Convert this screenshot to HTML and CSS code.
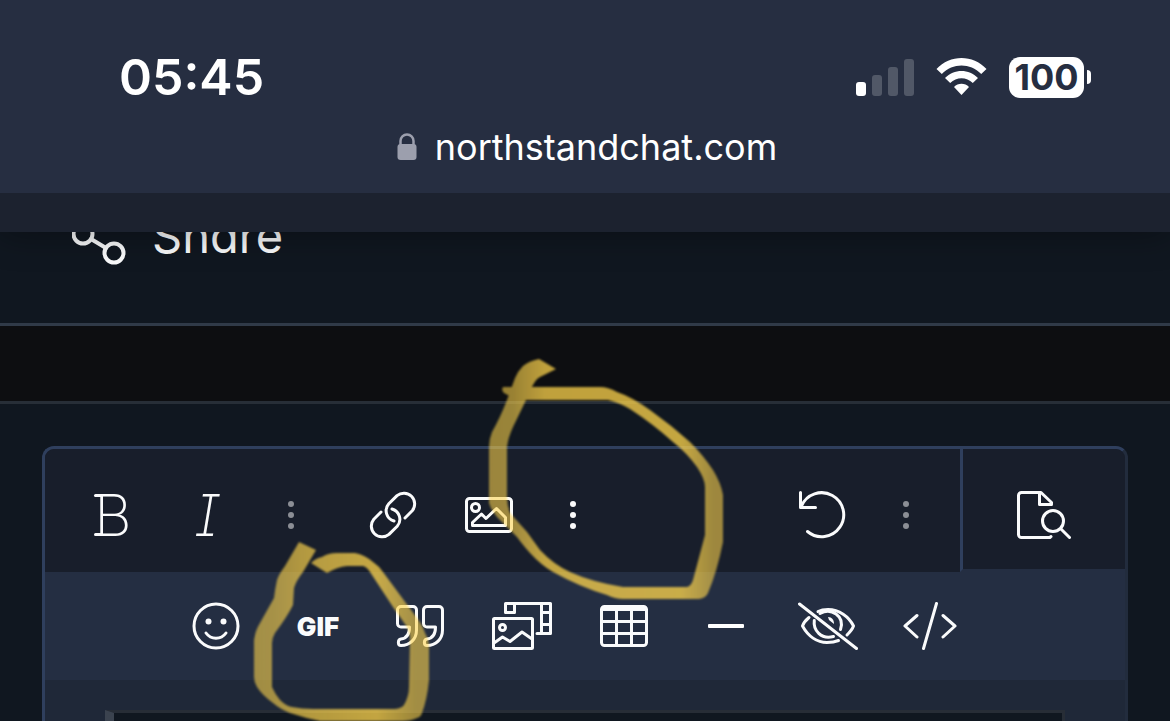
FILE: index.html
```html
<!DOCTYPE html>
<html lang="en">
<head>
    <meta charset="UTF-8">
    <meta name="viewport" content="width=device-width, initial-scale=1.0">
    <title>northstandchat.com</title>
    <link rel="stylesheet" href="styles.css">
</head>
<body>
    <header class="browser-header">
        <div class="status-bar">
            <div class="time">05:45</div>
            <div class="status-icons">
                <div class="signal">
                    <span class="bar bar-1 on"></span>
                    <span class="bar bar-2"></span>
                    <span class="bar bar-3"></span>
                    <span class="bar bar-4"></span>
                </div>
                <svg class="wifi" width="51" height="38" viewBox="0 0 51 38">
                    <path d="M0.5 11 C14 -3.6 37 -3.6 50.5 11 L45.2 16 C34 4.800 17 4.800 5.800 16 Z"/>
                    <path d="M9 20 C18 10.500 33 10.500 42 20 L36.800 25 C30.500 18.500 20.500 18.500 14.200 25 Z"/>
                    <path d="M18 29 C22 24.800 29 24.800 33 29 L25.500 37 Z"/>
                </svg>
                <div class="battery">
                    <div class="battery-level">100</div>
                    <span class="battery-tip"></span>
                </div>
            </div>
        </div>
        <div class="address">
            <svg class="lock" width="20" height="28" viewBox="0 0 20 28">
                <path d="M3.500 13 V8 a6.500 6.500 0 0 1 13 0 V13" fill="none" stroke="#9c9fad" stroke-width="2.500"/>
                <rect x="0.5" y="11" width="19" height="16" rx="3" fill="#9c9fad"/>
            </svg>
            <span>northstandchat.com</span>
        </div>
    </header>
    <div class="site-strip"></div>

    <div class="post-actions">
        <a class="share" href="#">
            <svg class="icon" width="54" height="62" viewBox="0 0 54 62">
                <circle cx="11" cy="31" r="9.500"/>
                <circle cx="42" cy="50" r="9.500"/>
                <circle cx="42" cy="12" r="9.500"/>
                <path d="M19 36 L34 45 M19 26 L34 17"/>
            </svg>
            <span>Share</span>
        </a>
    </div>
    <div class="divider"></div>

    <main class="reply">
        <div class="editor">
            <div class="toolbar">
                <div class="tool-group">
                    <button class="tool" aria-label="Bold"><span class="letter bold-letter">B</span></button>
                    <button class="tool" aria-label="Italic"><span class="letter italic-letter">I</span></button>
                    <button class="tool more muted" aria-label="More text options"><i></i><i></i><i></i></button>
                </div>
                <div class="tool-group">
                    <button class="tool" aria-label="Insert link">
                        <svg class="icon" width="48" height="48" viewBox="0 0 48 48">
                            <path d="M36 27 L43.200 19.800 A10.800 10.800 0 0 0 28 4.600 L19.800 12.800 A10.600 10.600 0 0 0 25 30"/>
                            <path d="M12 21 L4.800 28.200 A10.800 10.800 0 0 0 20 43.400 L28.200 35.200 A10.600 10.600 0 0 0 23 18"/>
                        </svg>
                    </button>
                    <button class="tool" aria-label="Insert image">
                        <svg class="icon" width="48" height="36" viewBox="0 0 48 36">
                            <rect x="1.500" y="1.500" width="45" height="33" rx="3"/>
                            <circle cx="10.500" cy="10.500" r="4"/>
                            <path d="M7.500 28.500 V25.500 L16.500 17 L21 21.500 L31.500 11.500 L40.500 20.500 V28.500 Z"/>
                        </svg>
                    </button>
                    <button class="tool more" aria-label="More insert options"><i></i><i></i><i></i></button>
                </div>
                <div class="tool-group tool-group-right">
                    <button class="tool" aria-label="Undo">
                        <svg class="icon" width="48" height="48" viewBox="0 0 48 48">
                            <path d="M2.500 1.500 V16.500 H17.500 M3.500 15 A22 22 0 1 1 9.500 40.500"/>
                        </svg>
                    </button>
                    <button class="tool more muted" aria-label="More options"><i></i><i></i><i></i></button>
                </div>
                <button class="preview" aria-label="Preview">
                    <svg class="icon" width="54" height="48" viewBox="0 0 54 48">
                        <path d="M33 46.300 L34 45.600 M33 46.500 H4.500 a3 3 0 0 1 -3 -3 V4.500 a3 3 0 0 1 3 -3 H24 L34.500 11.500 V13.500 H22.500 V1.500"/>
                        <circle cx="36" cy="30" r="10.500"/>
                        <path d="M44 38 L52.500 46.500"/>
                    </svg>
                </button>
            </div>

            <div class="toolbar-extra">
                <button class="tool" aria-label="Smilies">
                    <svg class="icon" width="48" height="48" viewBox="0 0 48 48">
                        <circle cx="24" cy="24" r="22"/>
                        <circle class="solid" cx="16.500" cy="19.500" r="3"/>
                        <circle class="solid" cx="31.500" cy="19.500" r="3"/>
                        <path d="M14 31 C19 38 29 38 34 31"/>
                    </svg>
                </button>
                <button class="tool gif">GIF</button>
                <button class="tool" aria-label="Quote">
                    <svg class="icon" width="48" height="42" viewBox="0 0 48 42">
                        <path d="M13.500 22 H5 a3.500 3.500 0 0 1 -3.500 -3.500 V5 a3.500 3.500 0 0 1 3.500 -3.500 H17 a3.500 3.500 0 0 1 3.500 3.500 V25 C20.500 34 14 40.500 5 40.500 C1.500 40.500 1.500 34.500 5 34 C10.500 33.300 13.500 30 13.500 22 Z"/>
                        <path d="M39.500 22 H31 a3.500 3.500 0 0 1 -3.500 -3.500 V5 a3.500 3.500 0 0 1 3.500 -3.500 H43 a3.500 3.500 0 0 1 3.500 3.500 V25 C46.500 34 40 40.500 31 40.500 C27.500 40.500 27.500 34.500 31 34 C36.500 33.300 39.500 30 39.500 22 Z"/>
                    </svg>
                </button>
                <button class="tool" aria-label="Media">
                    <svg class="icon" width="60" height="48" viewBox="0 0 60 48">
                        <path d="M13.500 1.500 H58.500 V31.500 H45 M13.500 1.500 V10.500 H22.500 V1.500 M49.500 1.500 V31.500 M49.500 10.500 H58.500 M49.500 22.500 H58.500"/>
                        <rect x="1.500" y="16.500" width="39" height="30" rx="1"/>
                        <circle cx="10.500" cy="25.500" r="3"/>
                        <path d="M2 41 L10.500 35 L18 39.500 L30 30 L40 37"/>
                    </svg>
                </button>
                <button class="tool" aria-label="Insert table">
                    <svg class="icon" width="48" height="42" viewBox="0 0 48 42">
                        <rect x="1.500" y="1.500" width="45" height="39" rx="3"/>
                        <path d="M2 4.500 H46 M16.500 4 V40 M31.500 4 V40 M2 16.500 H46 M2 28.500 H46"/>
                    </svg>
                </button>
                <button class="tool" aria-label="Horizontal line"><span class="rule"></span></button>
                <button class="tool" aria-label="Spoiler">
                    <svg class="icon" width="60" height="48" viewBox="0 0 60 48">
                        <path d="M1.500 2 L58.500 46.500"/>
                        <path d="M11 15.500 C8 18 5.500 21 4.500 24 C10 34 19 40.500 29 40.500 C33 40.500 37 40 40.500 38.500"/>
                        <path d="M20 9.500 C23 8 26.500 7.500 30 7.500 C41 7.500 51 14.500 55.500 24 C54.500 27 52 30 49 33"/>
                        <path d="M22 11.500 C33 5 47 14 42.500 27.500 M16.300 18.500 C15 28 23 38 35.500 34.500"/>
                        <path class="solid" d="M30 15 C34 15 36 18 36 22 L31 18 Z"/>
                    </svg>
                </button>
                <button class="tool" aria-label="Code">
                    <svg class="icon" width="54" height="48" viewBox="0 0 54 48">
                        <path d="M14 13.500 L2 24 L14 35 M40 13.500 L52 24 L40 35 M33.500 1.500 L20.500 46.500"/>
                    </svg>
                </button>
            </div>

            <div class="editor-body">
                <textarea class="message" aria-label="Message"></textarea>
            </div>
        </div>
    </main>

    <!-- highlighter circles -->
    <svg class="marker" width="1170" height="721" viewBox="0 0 1170 721">
        <defs>
            <linearGradient id="ink-more" gradientUnits="userSpaceOnUse" x1="489" y1="0" x2="723" y2="0">
                <stop offset="0" stop-color="#ffd54c" stop-opacity="0.570"/>
                <stop offset="0.1" stop-color="#ffd54c" stop-opacity="0.580"/>
                <stop offset="0.24" stop-color="#ffd54c" stop-opacity="0.740"/>
                <stop offset="0.82" stop-color="#ffd54c" stop-opacity="0.760"/>
                <stop offset="0.96" stop-color="#ffd54c" stop-opacity="0.580"/>
            </linearGradient>
            <linearGradient id="ink-gif" gradientUnits="userSpaceOnUse" x1="254" y1="0" x2="429" y2="0">
                <stop offset="0" stop-color="#ffd54c" stop-opacity="0.580"/>
                <stop offset="0.12" stop-color="#ffd54c" stop-opacity="0.600"/>
                <stop offset="0.3" stop-color="#ffd54c" stop-opacity="0.680"/>
                <stop offset="0.7" stop-color="#ffd54c" stop-opacity="0.750"/>
                <stop offset="0.92" stop-color="#ffd54c" stop-opacity="0.590"/>
            </linearGradient>
        </defs>
        <path fill="url(#ink-more)" d="M556 369 L539 359 Q529 361 523 366 Q518 371 515 378 L507 400 Q500 418 492 432 Q489 439 489 447 V503 Q491 510 497 517 L517 537 Q522 544 530 553 Q541 565 553 572 Q580 587 607 595 Q615 599 623 599 H699 Q706 598 708 593 Q717 572 723 542 V495 Q721 483 713 470 Q703 455 690 442 Q671 425 650 410 Q632 397 617 392 Q608 387 600 387 H503 Q501 390 504 393 L517 400 H608 Q620 403 630 409 Q653 424 673 442 Q687 453 697 467 Q705 479 705 487 V535 L693 580 Q691 586 687 587 H623 Q592 582 570 572 Q553 564 540 550 L527 532 L510 513 Q507 505 507 497 V447 Q508 438 513 427 L527 398 Q530 389 533 385 Q536 379 540 377 Z"/>
        <path fill="url(#ink-gif)" d="M299 542 L316 550 L303 572 Q296 581 294 588 L293 605 Q287 617 275 633 Q272 638 272 643 V687 Q275 694 280 700 Q286 706 292 707 Q302 709 313 709 H395 Q402 708 404 705 Q409 696 409 687 L410 637 Q409 631 407 627 L393 607 L370 572 Q367 567 363 566 H347 Q337 567 327 573 L311 563 Q316 558 322 557 Q328 553 337 553 H355 Q365 555 373 562 Q379 566 383 572 L417 618 Q423 626 425 633 Q429 640 429 647 V680 Q427 700 422 713 Q421 717 417 718 Q411 721 403 721 H320 Q305 718 290 713 Q280 709 273 703 Q262 695 257 687 Q254 682 254 677 V640 Q255 631 260 623 L274 598 Q275 589 277 580 Q279 574 285 566 Z"/>
    </svg>
</body>
</html>
```

FILE: styles.css
```css
:root {
    --header-bg: #262e41;
    --page-bg: #101720;
    --bar-bg: #181e2b;
    --bar-extra-bg: #242e42;
    --edge: #2f3f5d;
    --edge-dim: #222c3d;
    --icon: #fafbfc;
}

* {
    box-sizing: border-box;
}

html,
body {
    height: 100%;
}

body {
    margin: 0;
    display: flex;
    flex-direction: column;
    position: relative;
    overflow: hidden;
    background: var(--page-bg);
    color: white;
    font-family: Inter, "Liberation Sans", sans-serif;
}

button {
    margin: 0;
    padding: 0;
    border: 0;
    background: none;
    color: var(--icon);
    font-family: inherit;
    cursor: pointer;
}

/* browser chrome */
.browser-header {
    flex: none;
    position: relative;
    z-index: 2;
    height: 193px;
    padding-top: 47px;
    background: var(--header-bg);
}

.status-bar {
    display: flex;
    align-items: center;
    justify-content: space-between;
    height: 60px;
    padding: 0 79px 0 119px;
}

.time {
    font-size: 50px;
    line-height: 60px;
    font-weight: 600;
}

.status-icons {
    display: flex;
    align-items: center;
    gap: 22px;
}

.signal {
    display: flex;
    align-items: flex-end;
    gap: 6px;
}

.bar {
    width: 10px;
    border-radius: 3px;
    background: #515867;
}

.bar.on {
    background: white;
}

.bar-1 { height: 14px; }
.bar-2 { height: 21px; }
.bar-3 { height: 29px; }
.bar-4 { height: 37px; }

.wifi {
    fill: white;
}

.battery {
    display: flex;
    align-items: center;
    gap: 3px;
}

.battery-level {
    width: 75px;
    height: 41px;
    border-radius: 11px;
    background: white;
    color: var(--header-bg);
    font-size: 36px;
    line-height: 41px;
    font-weight: 700;
    text-align: center;
}

.battery-tip {
    width: 4px;
    height: 14px;
    border-radius: 0 4px 4px 0;
    background: white;
}

.address {
    display: flex;
    align-items: center;
    justify-content: center;
    gap: 18px;
    height: 80px;
    padding-left: 4px;
    font-size: 36px;
    line-height: 80px;
}

.site-strip {
    flex: none;
    position: relative;
    z-index: 1;
    height: 39px;
    background: #1c222f;
    box-shadow: 0 0 36px rgba(0, 0, 0, 0.4);
}

/* end of the last post */
.post-actions {
    flex: none;
    height: 94px;
    padding-left: 72px;
    overflow: hidden;
    border-bottom: 3px solid #303a48;
}

.share {
    display: inline-flex;
    align-items: center;
    gap: 26px;
    height: 62px;
    margin-top: -29px;
    color: var(--icon);
    font-size: 47px;
    line-height: 66px;
    font-feature-settings: "cv11";
    text-decoration: none;
}

.share span {
    padding-top: 4px;
}

.share .icon {
    stroke-width: 4;
}

.divider {
    flex: none;
    height: 78px;
    background: #0d0e11;
    border-bottom: 3px solid #272e37;
}

.icon {
    display: block;
    fill: none;
    stroke: var(--icon);
    stroke-width: 3;
    stroke-linecap: round;
    stroke-linejoin: round;
}

.icon .solid {
    fill: var(--icon);
    stroke: none;
}

/* editor */
.reply {
    flex: 1;
    display: flex;
    min-height: 0;
    padding: 42px 42px 0;
}

.editor {
    flex: 1;
    display: flex;
    flex-direction: column;
    min-height: 0;
    border: 3px solid var(--edge);
    border-right-color: var(--edge-dim);
    border-bottom: 0;
    border-radius: 12px 12px 0 0;
    background: #1f2838;
    overflow: hidden;
}

.toolbar {
    flex: none;
    display: flex;
    height: 123px;
    padding-left: 18px;
    background: var(--bar-bg);
}

.tool-group {
    display: flex;
    margin-right: 18px;
    padding-top: 9px;
}

.tool-group-right {
    margin-left: auto;
}

.tool {
    display: flex;
    align-items: center;
    justify-content: center;
    width: 96px;
}

.more {
    flex-direction: column;
    gap: 5px;
    width: 72px;
}

.more i {
    width: 6px;
    height: 6px;
    border-radius: 50%;
    background: var(--icon);
}

.more.muted i {
    background: #8b8e95;
}

.letter {
    position: relative;
    font-size: 58px;
    line-height: 60px;
    font-weight: 200;
}

.bold-letter {
    padding-left: 4px;
}

/* small slab ends on the left of the stem */
.bold-letter::before,
.bold-letter::after {
    content: "";
    position: absolute;
    left: 4px;
    width: 8px;
    height: 3px;
    border-radius: 2px;
    background: var(--icon);
}

.bold-letter::before {
    top: 9px;
}

.bold-letter::after {
    bottom: 9px;
}

.italic-letter {
    font-style: italic;
    font-feature-settings: "cv08";
}

.preview {
    display: flex;
    align-items: center;
    justify-content: center;
    width: 165px;
    padding-top: 12px;
    border-left: 3px solid var(--edge);
    border-bottom: 3px solid var(--bar-extra-bg);
}

.toolbar-extra {
    flex: none;
    display: flex;
    gap: 6px;
    height: 108px;
    padding-left: 123px;
    background: var(--bar-extra-bg);
}

.gif {
    font-size: 26px;
    font-weight: 900;
}

.rule {
    width: 36px;
    height: 4px;
    border-radius: 1px;
    background: white;
}

.editor-body {
    flex: 1;
    display: flex;
    min-height: 0;
    padding: 30px 60px 0;
}

.message {
    flex: 1;
    min-height: 0;
    margin: 0;
    padding: 0 12px;
    border: 3px solid #272d36;
    border-left: 9px solid #3b434f;
    border-bottom: 0;
    outline: 0;
    resize: none;
    overflow: hidden;
    background: var(--page-bg);
    color: white;
}

.marker {
    position: absolute;
    top: 0;
    left: 0;
    z-index: 3;
    filter: blur(1px);
    pointer-events: none;
}
```
